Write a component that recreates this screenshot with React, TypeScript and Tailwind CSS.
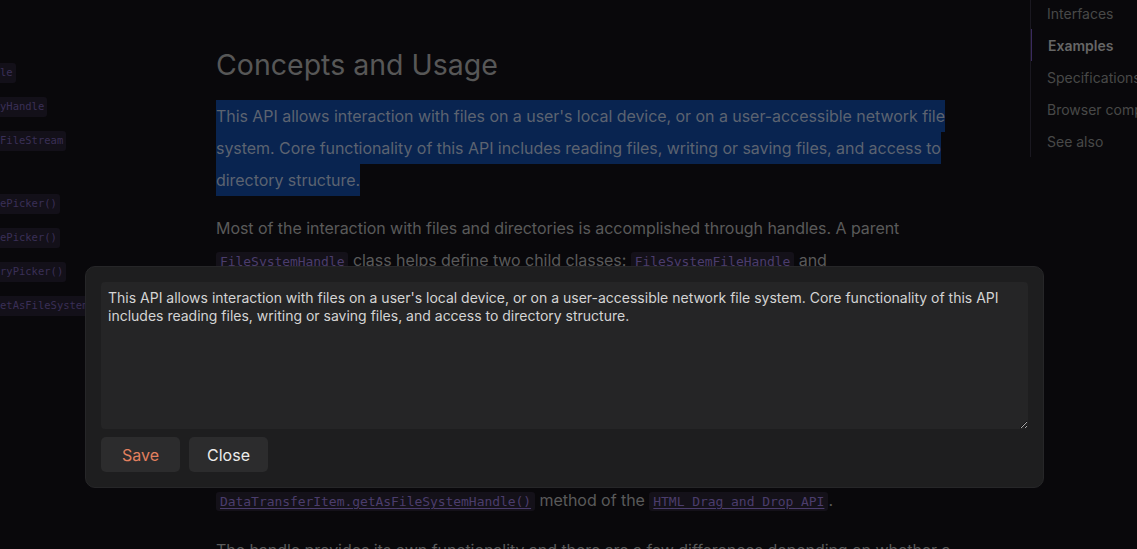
import { useState } from "react";

const sidebarItems = ["le", "yHandle", "FileStream", null, "ePicker()", "ePicker()", "ryPicker()", "etAsFileSystemHandle()"];

const tocItems = ["Interfaces", "Examples", "Specifications", "Browser compatibility", "See also"];

const Code = ({ children, link = false }: { children: React.ReactNode; link?: boolean }) => (
  <code
    className={`rounded-[3px] bg-[#141119] px-[4px] py-[2px] font-['DejaVu_Sans_Mono',monospace] text-[13px] text-[#4b3d6c] ${
      link ? "underline underline-offset-2" : ""
    }`}
  >
    {children}
  </code>
);

const App = () => {
  const [note, setNote] = useState(
    "This API allows interaction with files on a user's local device, or on a user-accessible network file system. Core functionality of this API includes reading files, writing or saving files, and access to directory structure."
  );

  return (
    <div className="relative flex h-[549px] w-full overflow-hidden bg-[#09080b] font-['Inter',sans-serif]">
      {/* left sidebar, mostly scrolled off */}
      <aside className="flex w-[216px] shrink-0 flex-col pt-[56px]">
        {sidebarItems.map((item, i) =>
          item === null ? (
            <div key={i} className="h-[29px]" />
          ) : (
            <div key={i} className="flex h-[34px] items-center">
              <span className="whitespace-nowrap rounded-r-[3px] bg-[#131019] py-[2px] pr-[3px] font-['DejaVu_Sans_Mono',monospace] text-[10.5px] text-[#3a2f56]">
                {item}
              </span>
            </div>
          )
        )}
      </aside>

      {/* main article */}
      <main className="w-[814px] shrink-0 pt-[47px]">
        <h2 className="mb-[17px] text-[28.5px] leading-[36px] text-[#575757]">Concepts and Usage</h2>
        <div className="max-w-[745px] text-[16px] leading-8 tracking-[-0.05px] text-[#5a5a5a]">
          <p className="mb-4">
            <span className="box-decoration-clone bg-[#092450] py-[6px] text-[#5c6370]">
              This API allows interaction with files on a user's local device, or on a user-accessible network file
              system. Core functionality of this API includes reading files, writing or saving files, and access to
              directory structure.
            </span>
          </p>
          <p className="mb-2">
            Most of the interaction with files and directories is accomplished through handles. A parent{" "}
            <Code>FileSystemHandle</Code> class helps define two child classes: <Code>FileSystemFileHandle</Code> and{" "}
            <Code>FileSystemDirectoryHandle</Code>, for files and directories respectively. The handles represent a
            file or directory on the user's system. You can first gain access to them by showing the user a file or
            directory picker using methods such as <Code>window.showOpenFilePicker()</Code> and{" "}
            <Code>window.showDirectoryPicker()</Code>. Once these are called, the file picker presents itself and the
            user selects either a file or directory.
          </p>
          <p className="mb-4">
            A handle is returned once this happens successfully. Handles are also available via the
            <br />
            <Code link>DataTransferItem.getAsFileSystemHandle()</Code> method of the <Code link>HTML Drag and Drop API</Code>.
          </p>
          <p className="mb-4">
            The handle provides its own functionality and there are a few differences depending on whether a file or
            directory was selected.
          </p>
        </div>
      </main>

      {/* table of contents */}
      <nav className="mt-[-3px] flex-1 self-start overflow-hidden border-l border-[#1a1820]">
        {tocItems.map((t) => (
          <div
            key={t}
            className={`flex h-8 items-center whitespace-nowrap pl-[16px] text-[14px] ${
              t === "Examples"
                ? "-ml-px border-l-2 border-[#3a2a5e] pl-[15px] font-semibold text-[#666666]"
                : "text-[#484848]"
            }`}
          >
            {t}
          </div>
        ))}
      </nav>

      {/* note editor dialog */}
      <div className="absolute left-[85px] top-[266px] w-[959px] rounded-[10px] border border-[#262628] bg-[#1e1e1f] p-[15px]">
        <textarea
          value={note}
          onChange={(e) => setNote(e.target.value)}
          className="block h-[147px] w-full rounded-[4px] bg-[#252526] p-[7px] text-[14px] leading-[18px] text-[#d4d4d4] outline-none"
        />
        <div className="mt-2 flex gap-[9px]">
          <button className="h-[35px] w-[79px] rounded-[5px] bg-[#2c2c2d] text-[16px] text-[#e2805f]">Save</button>
          <button className="h-[35px] w-[79px] rounded-[5px] bg-[#2c2c2d] text-[16px] text-[#ececec]">Close</button>
        </div>
      </div>
    </div>
  );
};

export default App;
